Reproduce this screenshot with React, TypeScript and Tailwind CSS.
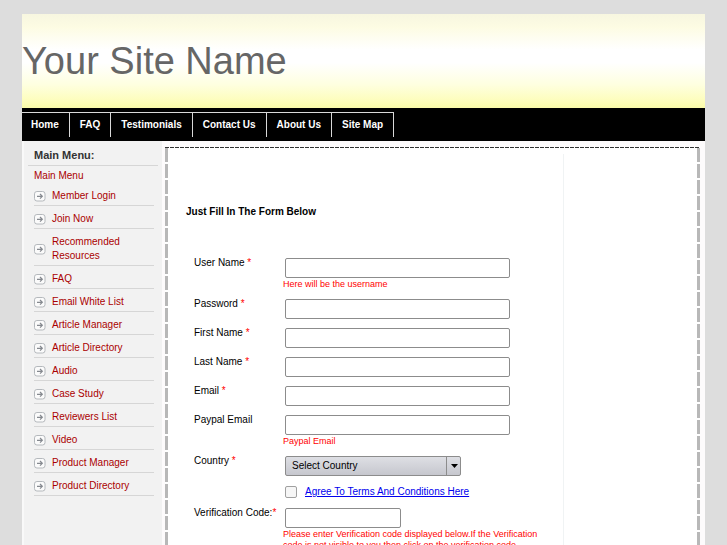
import { useState } from "react";

const tabs = ["Home", "FAQ", "Testimonials", "Contact Us", "About Us", "Site Map"];

const menu = [
  "Member Login",
  "Join Now",
  "Recommended Resources",
  "FAQ",
  "Email White List",
  "Article Manager",
  "Article Directory",
  "Audio",
  "Case Study",
  "Reviewers List",
  "Video",
  "Product Manager",
  "Product Directory",
];

type Field = {
  id: string;
  label: string;
  type?: string;
  required?: boolean;
  hint?: string;
};

const fields: Field[] = [
  { id: "username", label: "User Name", required: true, hint: "Here will be the username" },
  { id: "password", label: "Password", type: "password", required: true },
  { id: "first", label: "First Name", required: true },
  { id: "last", label: "Last Name", required: true },
  { id: "email", label: "Email", type: "email", required: true },
  { id: "paypal", label: "Paypal Email", type: "email", hint: "Paypal Email" },
];

const inputStyle =
  "block h-5 rounded-xs border border-[#8c8c8c] bg-white px-1 text-[10px] outline-none";

function ArrowIcon() {
  return (
    <svg className="h-3 w-3 shrink-0" viewBox="0 0 12 12" fill="none">
      <rect x="0.5" y="1.5" width="10.5" height="9.5" rx="2.4" fill="#fbfbfb" stroke="#b4b8bc" />
      <path d="M3 6.3h5M6 4l2.3 2.3L6 8.6" stroke="#85898f" strokeWidth="1.2" />
    </svg>
  );
}

function Star() {
  return <span className="text-[#ff0000]">*</span>;
}

function Hint({ children }: { children: React.ReactNode }) {
  return <p className="w-[260px] pt-px text-[9px] leading-[11px] text-[#ff0000]">{children}</p>;
}

function Header() {
  return (
    <header className="flex h-[94px] items-center bg-[linear-gradient(#f7f6e0_0%,#fdfce3_14%,#ffffff_38%,#ffffff_52%,#feffe0_75%,#fdfdb8_94%,#fafba8_100%)]">
      <h1 className="text-[38px] leading-none text-[#666666]">Your Site Name</h1>
    </header>
  );
}

function Nav() {
  return (
    <nav className="h-[33px] bg-black pt-1">
      <ul className="-ml-px flex">
        {tabs.map((tab) => (
          <li key={tab}>
            <a
              href="#"
              className="block h-[25px] border-t border-r border-[#d8d8d8] px-2.5 pt-[5px] text-[10px] leading-[14px] font-bold text-white"
            >
              {tab}
            </a>
          </li>
        ))}
      </ul>
    </nav>
  );
}

function Sidebar() {
  return (
    <aside className="w-[140px] shrink-0 border-l-2 border-[#f9f9f9] bg-[#f2f2f2] pt-2 text-[10px] text-[#aa0000]">
      <h2 className="mx-1 border-b border-[#d6d6d6] pb-[3px] pl-1.5 text-[11px] leading-[13px] font-bold text-[#333333]">
        Main Menu:
      </h2>
      <div className="pt-[3px] pl-2.5">
        <a href="#" className="block leading-[14px]">
          Main Menu
        </a>
        <ul className="mr-2">
          {menu.map((item) => (
            <li key={item} className="border-b border-[#d6d6d6] pt-1.5 pb-0.5">
              <a href="#" className="flex items-center gap-1.5 leading-[14px]">
                <ArrowIcon />
                {item}
              </a>
            </li>
          ))}
        </ul>
      </div>
    </aside>
  );
}

function SignupForm() {
  const [country, setCountry] = useState("");

  return (
    <form className="grid grid-cols-[89px_1fr] text-[10px] leading-[14px]">
      {fields.map((f) => (
        <div key={f.id} className="col-span-2 grid grid-cols-subgrid pb-[7px]">
          <label htmlFor={f.id}>
            {f.label} {f.required && <Star />}
          </label>
          <div className="pt-0.5">
            <input id={f.id} type={f.type ?? "text"} className={`${inputStyle} ml-0.5 w-[225px]`} />
            {f.hint && <Hint>{f.hint}</Hint>}
          </div>
        </div>
      ))}

      <label htmlFor="country">
        Country <Star />
      </label>
      <div className="pt-0.5">
        <div className="relative ml-0.5 w-[176px]">
          <select
            id="country"
            value={country}
            onChange={(e) => setCountry(e.target.value)}
            className="block h-5 w-full appearance-none rounded-xs border border-[#8c8c8c] bg-linear-to-b from-[#dedfe4] to-[#c6c7ce] px-1.5 text-[10px]"
          >
            <option value="">Select Country</option>
            <option value="us">United States</option>
            <option value="uk">United Kingdom</option>
          </select>
          <span className="pointer-events-none absolute inset-y-0 right-0 flex w-[15px] items-center justify-center border-l border-[#8c8c8c]">
            <svg className="h-1 w-[7px]" viewBox="0 0 7 4">
              <path d="M0 0h7L3.5 4z" />
            </svg>
          </span>
        </div>
        <div className="flex h-[30px] items-center gap-2 pt-0.5 pl-0.5">
          <input
            id="terms"
            type="checkbox"
            className="h-3 w-3 appearance-none rounded-xs border border-[#a0a0a0] bg-[#f6f6f6] checked:bg-[#666666]"
          />
          <label htmlFor="terms">
            <a href="#" className="text-[#0000ee] underline">
              Agree To Terms And Conditions Here
            </a>
          </label>
        </div>
      </div>

      <label htmlFor="code">
        Verification Code:
        <Star />
      </label>
      <div className="pt-0.5">
        <input id="code" type="text" className={`${inputStyle} ml-0.5 w-[116px]`} />
        <Hint>
          Please enter Verification code displayed below.If the Verification code is not visible to
          you then click on the verification code
        </Hint>
      </div>
    </form>
  );
}

export default function App() {
  return (
    <div className="min-h-screen bg-[#dddddd] px-[22px] pt-3.5 font-['Liberation_Sans',Arial,sans-serif] text-black">
      <Header />
      <Nav />
      <div className="flex bg-[#fdfbfc]">
        <Sidebar />
        <div className="mt-1.5 mr-[5px] ml-[3px] flex-1 bg-white">
          {/* dashed frame round the content */}
          <div className="h-px bg-[repeating-linear-gradient(90deg,#333333_0px,#333333_4px,#ffffff_4px,#ffffff_5px)]" />
          <div className="flex">
            <div className="w-[3px] bg-[repeating-linear-gradient(#b8b8b8_0px,#b8b8b8_14px,#ffffff_14px,#ffffff_16px)]" />
            <main className="mt-1.5 flex-1 border-r border-[#f0f3f4] pt-[51px] pb-8 pl-[18px]">
              <h2 className="text-[10px] leading-[14px] font-bold">Just Fill In The Form Below</h2>
              <div className="pt-[37px] pl-2">
                <SignupForm />
              </div>
            </main>
            <div className="w-[133px]" />
            <div className="w-[3px] bg-[repeating-linear-gradient(#b8b8b8_0px,#b8b8b8_14px,#ffffff_14px,#ffffff_16px)]" />
          </div>
        </div>
      </div>
    </div>
  );
}
